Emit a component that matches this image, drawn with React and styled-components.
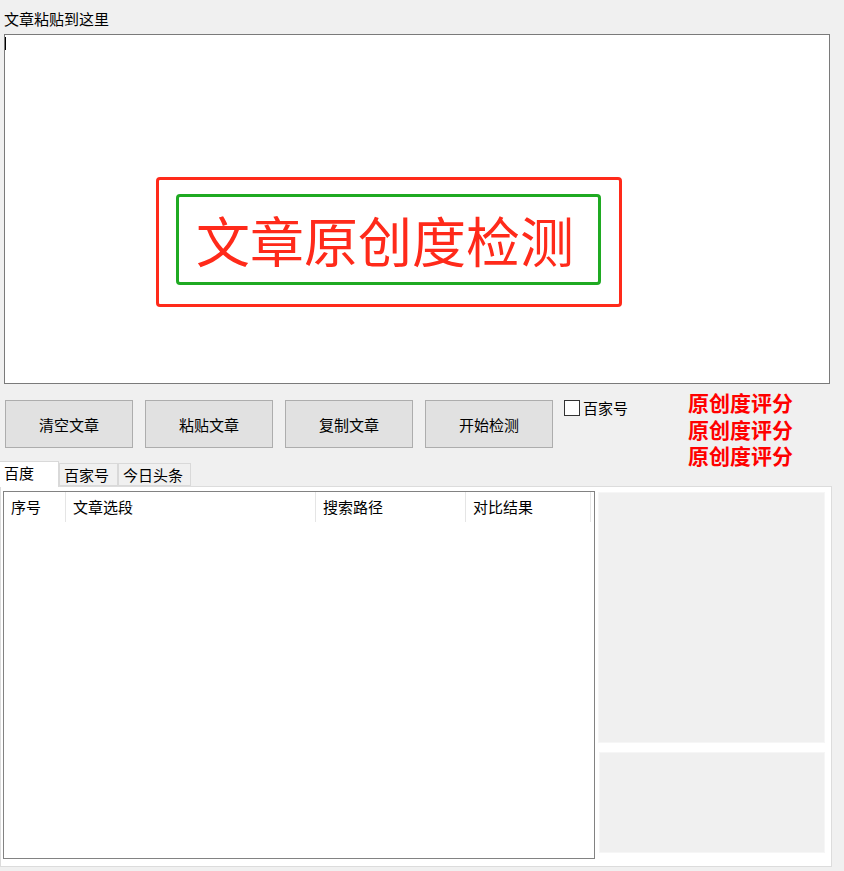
import React, { useState } from 'react';
import styled, { createGlobalStyle } from 'styled-components';

const GlobalStyle = createGlobalStyle`
  html, body {
    margin: 0;
    padding: 0;
    background: #f0f0f0;
  }
  body {
    font-family: "Noto Sans CJK SC", "Noto Sans", sans-serif;
    font-size: 15px;
    color: #000;
  }
  * {
    box-sizing: border-box;
  }
`;

const Window = styled.div`
  width: 844px;
  height: 871px;
  padding-top: 9px;
  background: #f0f0f0;
  overflow: hidden;
`;

const FieldLabel = styled.div`
  margin-left: 4px;
  line-height: 20px;
  height: 20px;
  margin-bottom: 5px;
`;

const Editor = styled.div`
  position: relative;
  margin-left: 4px;
  width: 826px;
  height: 350px;
  background: #fff;
  border: 1px solid #7a7a7a;
  padding: 2px 0 0 0;
`;

const Caret = styled.div`
  width: 1px;
  height: 13px;
  background: #000;
`;

// the banner sits over the text box, like a picture control on top of it
const Banner = styled.div`
  position: absolute;
  left: 151px;
  top: 142px;
  width: 466px;
  height: 130px;
  border: 3px solid #ff2a1a;
  border-radius: 4px;
  padding: 14px 18px 19px 17px;
  display: flex;
`;

const BannerInner = styled.div`
  flex: 1;
  border: 3px solid #1faa22;
  border-radius: 4px;
  display: flex;
  align-items: center;
  justify-content: center;
`;

const BannerText = styled.span`
  color: #ff2a1a;
  font-size: 54px;
  line-height: 1;
  white-space: nowrap;
  padding-right: 7px;
`;

const Controls = styled.div`
  display: flex;
  align-items: flex-start;
  height: 72px;
  margin-top: 5px;
`;

const Buttons = styled.div`
  display: flex;
  gap: 12px;
  margin-left: 5px;
  margin-top: 11px;
`;

const Button = styled.button`
  width: 128px;
  height: 48px;
  background: #e1e1e1;
  border: 1px solid #adadad;
  border-radius: 0;
  font-family: inherit;
  font-size: 15px;
  color: #000;
  padding: 0;
  cursor: pointer;
`;

const CheckLabel = styled.label`
  display: flex;
  align-items: center;
  margin-left: 11px;
  margin-top: 9px;
  line-height: 20px;
  cursor: pointer;
`;

const CheckBox = styled.span`
  width: 16px;
  height: 16px;
  border: 1px solid #333;
  background: #fff;
  margin-right: 3px;
  display: flex;
  align-items: center;
  justify-content: center;
  font-size: 12px;
  line-height: 1;
`;

const Scores = styled.div`
  margin-left: 60px;
  margin-top: 3px;
  display: flex;
  flex-direction: column;
  gap: 6px;
`;

const Score = styled.div`
  color: #ff0000;
  font-weight: bold;
  font-size: 21px;
  line-height: 20.5px;
  white-space: nowrap;
`;

const TabStrip = styled.div`
  display: flex;
  align-items: flex-end;
  height: 25px;
  position: relative;
  z-index: 1;
`;

const Tab = styled.div`
  height: ${(p) => (p.$active ? '26px' : '23px')};
  margin-bottom: ${(p) => (p.$active ? '-1px' : '0')};
  padding: 0 4px;
  line-height: 21px;
  background: ${(p) => (p.$active ? '#fff' : '#f0f0f0')};
  border: 1px solid #d9d9d9;
  border-bottom: ${(p) => (p.$active ? 'none' : '1px solid #d9d9d9')};
  border-left: ${(p) => (p.$first ? 'none' : '1px solid #d9d9d9')};
  width: ${(p) => p.$width}px;
  cursor: pointer;
`;

const Panel = styled.div`
  width: 832px;
  height: 381px;
  background: #fff;
  border: 1px solid #dcdcdc;
  padding: 4px 6px 7px 2px;
  display: flex;
`;

const ListView = styled.div`
  width: 592px;
  height: 368px;
  border: 1px solid #828282;
  background: #fff;
`;

const HeaderRow = styled.div`
  display: flex;
  height: 30px;
`;

const HeaderCell = styled.div`
  width: ${(p) => p.$width}px;
  padding-left: 7px;
  line-height: 30px;
  border-right: 1px solid #e5e5e5;
  white-space: nowrap;
`;

const Side = styled.div`
  flex: 1;
  margin-left: 3px;
  display: flex;
  flex-direction: column;
  gap: 9px;
`;

const SideBox = styled.div`
  height: ${(p) => p.$height}px;
  margin-top: ${(p) => p.$top || 0}px;
  margin-left: ${(p) => p.$left || 0}px;
  background: #f0f0f0;
  border: 1px solid #f6f6f6;
`;

const columns = [
  { title: '序号', width: 62 },
  { title: '文章选段', width: 250 },
  { title: '搜索路径', width: 150 },
  { title: '对比结果', width: 125 },
];

const tabs = [
  { title: '百度', width: 59 },
  { title: '百家号', width: 59 },
  { title: '今日头条', width: 73 },
];

const App = () => {
  const [activeTab, setActiveTab] = useState(0);
  const [baijiahao, setBaijiahao] = useState(false);

  return (
    <Window>
      <GlobalStyle />
      <FieldLabel>文章粘贴到这里</FieldLabel>
      <Editor>
        <Caret />
        <Banner>
          <BannerInner>
            <BannerText>文章原创度检测</BannerText>
          </BannerInner>
        </Banner>
      </Editor>

      <Controls>
        <Buttons>
          <Button>清空文章</Button>
          <Button>粘贴文章</Button>
          <Button>复制文章</Button>
          <Button>开始检测</Button>
        </Buttons>
        <CheckLabel onClick={() => setBaijiahao(!baijiahao)}>
          <CheckBox>{baijiahao ? '✓' : ''}</CheckBox>
          百家号
        </CheckLabel>
        <Scores>
          <Score>原创度评分</Score>
          <Score>原创度评分</Score>
          <Score>原创度评分</Score>
        </Scores>
      </Controls>

      <TabStrip>
        {tabs.map((t, i) => (
          <Tab
            key={t.title}
            $active={i === activeTab}
            $first={i === 0}
            $width={t.width}
            onClick={() => setActiveTab(i)}
          >
            {t.title}
          </Tab>
        ))}
      </TabStrip>
      <Panel>
        <ListView>
          <HeaderRow>
            {columns.map((c) => (
              <HeaderCell key={c.title} $width={c.width}>
                {c.title}
              </HeaderCell>
            ))}
          </HeaderRow>
        </ListView>
        <Side>
          <SideBox $height={251} $top={1} />
          <SideBox $height={101} $left={1} />
        </Side>
      </Panel>
    </Window>
  );
};

export default App;
